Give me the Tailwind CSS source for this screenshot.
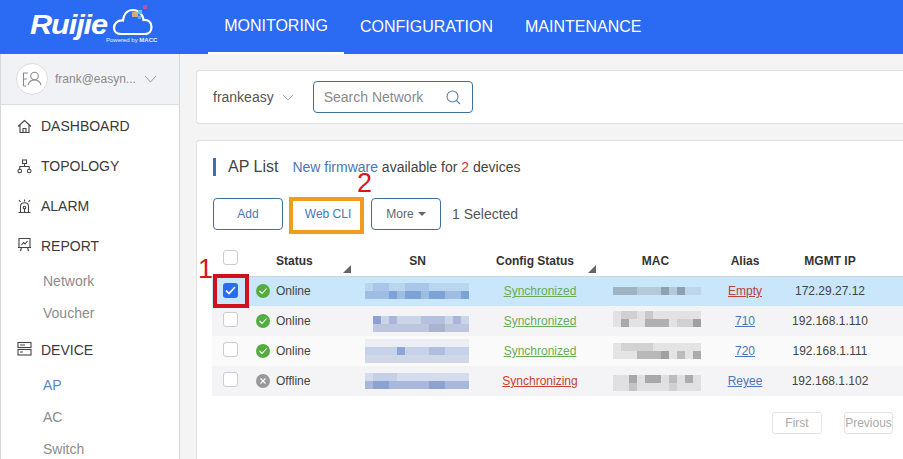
<!DOCTYPE html>
<html lang="en">
<head>
  <meta charset="UTF-8">
  <script src="https://cdn.jsdelivr.net/npm/@tailwindcss/browser@4"></script>
  <title>AP List</title>
</head>
<body class="w-[903px] h-[459px] overflow-hidden bg-[#f4f4f4] font-['Liberation_Sans',Arial,sans-serif] text-[#333]">
  <!-- Header -->
  <header class="h-[54px] bg-[#2b6af2] flex text-white">
    <div class="w-[208px] relative shrink-0">
      <span class="absolute left-[30px] top-[10px] text-[27px] leading-[30px] font-bold italic tracking-[-1px] scale-x-[1.14] origin-left">Ruijie</span>
      <svg class="absolute left-[112px] top-[4px]" width="42" height="32" viewBox="0 0 42 32" fill="none">
        <path d="M9 30 H33 C38 30 39.500 26 39.500 23 C39.500 18 36 15.500 31.500 16 C31 11 27 6 21 6 C14.500 6 11.500 11 11 16.500 C5 16 2 20 2 24 C2 27.500 5 30 9 30 Z" stroke="#fff" stroke-width="2.200"/>
        <rect x="20" y="8" width="6" height="5" fill="#c9b27a"/>
        <rect x="26" y="6" width="4" height="4" fill="#5fc6e8"/>
        <rect x="26" y="12" width="3" height="3" fill="#6fa8ee"/>
        <rect x="31" y="1" width="4" height="4" fill="#c2509e"/>
      </svg>
      <span class="absolute left-[106px] top-[37px] text-[6px] leading-[7px] whitespace-nowrap text-white/90">Powered by <b>MACC</b></span>
    </div>
    <nav class="flex text-[16px]">
      <a class="w-[136px] h-[54px] flex items-center justify-center border-b-[2px] border-white">MONITORING</a>
      <a class="ml-[16px] h-[54px] flex items-center">CONFIGURATION</a>
      <a class="ml-[32px] h-[54px] flex items-center">MAINTENANCE</a>
    </nav>
  </header>

  <div class="flex h-[405px]">
    <!-- Sidebar -->
    <aside class="w-[180px] shrink-0 bg-white border-l border-r border-[#d9d9d9] overflow-hidden">
      <div class="h-[51px] bg-[#f0f2f5] border-b border-[#dcdcdc] flex items-center pl-[15px]">
        <span class="w-[32px] h-[32px] rounded-full bg-white border border-[#ddd] flex items-center justify-center">
          <svg width="20" height="16" viewBox="0 0 20 16" fill="none" stroke="#888" stroke-width="1.100">
            <path d="M6 2 H1.500 V15 M1.500 8 H5 M1.500 15 H4"/>
            <circle cx="12.500" cy="5" r="3.800"/>
            <path d="M6 14 C7 10.500 9.500 9 12.500 9 C15.500 9 18 10.500 19 14"/>
          </svg>
        </span>
        <span class="ml-[7px] text-[12px] text-[#8a8a8a]">frank@easyn...</span>
        <svg class="ml-[8px]" width="13" height="8" viewBox="0 0 13 8" fill="none" stroke="#999" stroke-width="1"><path d="M1 1 L6.500 7 L12 1"/></svg>
      </div>
      <ul class="text-[14px] text-[#3a3a3a]">
        <li class="h-[40px] flex items-center pl-[16px] pt-[2px] gap-[9px]">
          <svg class="w-[15px] h-[15px]" viewBox="0 0 15 15" fill="none" stroke="#444" stroke-width="1.100"><path d="M1 7.500 L7.500 1.500 L14 7.500 M3 6 V13.500 H12 V6 M6 13.500 V9.500 H9 V13.500"/></svg>
          DASHBOARD
        </li>
        <li class="h-[40px] flex items-center pl-[16px] pt-[2px] gap-[9px]">
          <svg class="w-[15px] h-[15px]" viewBox="0 0 15 15" fill="none" stroke="#444" stroke-width="1.100"><rect x="5.500" y="1" width="4" height="3.500"/><circle cx="2.800" cy="12" r="1.800"/><circle cx="12.200" cy="12" r="1.800"/><path d="M7.500 4.500 V7.500 M2.800 10 V7.500 H12.200 V10"/></svg>
          TOPOLOGY
        </li>
        <li class="h-[40px] flex items-center pl-[16px] pt-[2px] gap-[9px]">
          <svg class="w-[15px] h-[15px]" viewBox="0 0 15 15" fill="none" stroke="#444" stroke-width="1.100"><path d="M3.500 13.500 V7.500 C3.500 5 5 3.800 7.500 3.800 C10 3.800 11.500 5 11.500 7.500 V13.500 M1.500 13.500 H13.500 M2 1 L3.500 3 M13 1 L11.500 3 M7.500 0.500 V2.500"/><circle cx="7.500" cy="8.500" r="1.300"/><path d="M7.500 10 V13"/></svg>
          ALARM
        </li>
        <li class="h-[40px] flex items-center pl-[16px] pt-[2px] gap-[9px]">
          <svg class="w-[15px] h-[15px] -translate-y-[2px]" viewBox="0 0 15 15" fill="none" stroke="#444" stroke-width="1.100"><path d="M2 1.500 H13 V10.500 H2 Z M1 10.500 H14 M4.500 10.500 L3.500 14 M10.500 10.500 L11.500 14"/><path d="M4.500 8 L6.500 5.500 L8 7 L10.500 4"/></svg>
          REPORT
        </li>
        <li class="h-[32px] flex items-center pl-[42px] text-[#8c8c8c]">Network</li>
        <li class="h-[32px] flex items-center pl-[42px] text-[#8c8c8c]">Voucher</li>
        <li class="h-[40px] flex items-center pl-[16px] pt-[2px] gap-[9px]">
          <svg class="w-[15px] h-[15px] -translate-y-[2px]" viewBox="0 0 15 15" fill="none" stroke="#444" stroke-width="1.100"><rect x="1" y="1.500" width="13" height="5"/><rect x="1" y="8.500" width="13" height="5.500"/><path d="M3 4 H8 M3 11 H6"/></svg>
          DEVICE
        </li>
        <li class="h-[32px] flex items-center pl-[42px] text-[#5b85c4]">AP</li>
        <li class="h-[32px] flex items-center pl-[42px] text-[#8c8c8c]">AC</li>
        <li class="h-[32px] flex items-center pl-[42px] text-[#8c8c8c]">Switch</li>
      </ul>
    </aside>

    <!-- Main -->
    <main class="flex-1 min-w-0 pl-[16px] pt-[16px] overflow-hidden">
      <section class="h-[54px] bg-white border border-[#e2e2e2] border-r-0 rounded-l-[4px] flex items-center pl-[16px]">
        <span class="text-[14px] text-[#555]">frankeasy</span>
        <svg class="ml-[8px]" width="12" height="7" viewBox="0 0 12 7" fill="none" stroke="#aaa" stroke-width="1"><path d="M1 1 L6 6 L11 1"/></svg>
        <div class="ml-[19px] w-[160px] h-[32px] border border-[#3f6f9e] rounded-[4px] flex items-center pl-[10px] pr-[11px] justify-between">
          <span class="text-[14px] text-[#8a8a8a]">Search Network</span>
          <svg width="15" height="15" viewBox="0 0 15 15" fill="none" stroke="#5b7fa8" stroke-width="1.100"><circle cx="6.500" cy="6.500" r="5.500"/><path d="M10.500 10.500 L14 14"/></svg>
        </div>
      </section>

      <section class="relative mt-[16px] h-[330px] bg-white border border-[#e2e2e2] border-r-0 rounded-l-[4px]">
        <div class="flex items-center h-[18px] mt-[17px] ml-[16px]">
          <span class="w-[3px] h-[18px] bg-[#3b6fb8]"></span>
          <span class="ml-[12px] text-[16px] text-[#444]">AP List</span>
          <span class="ml-[14px] text-[14px] text-[#444]"><span class="text-[#4a76b8]">New firmware</span> available for <span class="text-[#d0342c]">2</span> devices</span>
        </div>
        <div class="flex items-center mt-[22px] ml-[16px] text-[12px]">
          <button class="w-[70px] h-[32px] border border-[#3f6f9e] rounded-[4px] text-[#4a76b8]">Add</button>
          <button class="ml-[10px] w-[70px] h-[32px] rounded-[4px] text-[#4a76b8]">Web CLI</button>
          <button class="ml-[8px] w-[70px] h-[32px] border border-[#3f6f9e] rounded-[4px] text-[#666] flex items-center justify-center gap-[4px]">More <span class="w-0 h-0 border-x-[4px] border-x-transparent border-t-[4px] border-t-[#666]"></span></button>
          <span class="ml-[11px] text-[14px] text-[#555]">1 Selected</span>
        </div>

        <table class="mt-[11px] ml-[15px] table-fixed w-[720px] text-[12px] text-[#444] border-collapse">
          <colgroup>
            <col class="w-[38px]"><col class="w-[95px]"><col class="w-[145px]"><col class="w-[100px]"><col class="w-[125px]"><col class="w-[60px]"><col class="w-[110px]"><col class="w-[47px]">
          </colgroup>
          <thead>
            <tr class="h-[35px] font-bold text-[#333] border-b border-[#cfd6dc]">
              <th class="relative"><span class="absolute left-[11px] top-[9px] w-[15px] h-[15px] border border-[#ccc] rounded-[3px]"></span></th>
              <th class="relative text-left pl-[26px] align-bottom pb-[6px]">Status<span class="absolute right-[-6px] bottom-[3px] w-0 h-0 border-l-[8px] border-l-transparent border-b-[8px] border-b-[#666]"></span></th>
              <th class="align-bottom pb-[6px]">SN</th>
              <th class="relative align-bottom pb-[6px] pr-[10px]">Config Status<span class="absolute right-[-6px] bottom-[3px] w-0 h-0 border-l-[8px] border-l-transparent border-b-[8px] border-b-[#666]"></span></th>
              <th class="align-bottom pb-[6px] pl-[6px]">MAC</th>
              <th class="align-bottom pb-[6px]">Alias</th>
              <th class="align-bottom pb-[6px]">MGMT IP</th>
              <th></th>
            </tr>
          </thead>
          <tbody>
            <tr class="h-[30px] bg-[#c9e6fb]">
              <td class="relative"><span class="absolute left-[11px] top-[6px] w-[15px] h-[15px] bg-[#2b6af2] rounded-[3px] flex items-center justify-center"><svg width="11" height="9" viewBox="0 0 11 9" fill="none" stroke="#fff" stroke-width="1.600"><path d="M1 4.500 L4 7.500 L10 1"/></svg></span></td>
              <td><div class="flex items-center pl-[6px] gap-[6px]"><svg width="14" height="14" viewBox="0 0 14 14"><circle cx="7" cy="7" r="7" fill="#55ad42"/><path d="M3.500 7 L6 9.500 L10.500 4.500" fill="none" stroke="#fff" stroke-width="1.100"/></svg>Online</div></td>
              <td class="pl-[20px]">
                <svg class="block" width="104" height="16" viewBox="0 0 104 16"><rect width="104" height="16" fill="#bcd5ee"/><rect x="8" width="16" height="8" fill="#a9c6e8"/><rect x="40" width="24" height="8" fill="#a9c6e8"/><rect y="8" width="104" height="8" fill="#9dbde2"/><rect x="24" y="8" width="8" height="8" fill="#7ba3d6"/><rect x="40" y="8" width="16" height="8" fill="#7ba3d6"/><rect x="64" y="8" width="16" height="8" fill="#7ba3d6"/><rect x="96" y="8" width="8" height="8" fill="#7ba3d6"/></svg>
              </td>
              <td class="text-center text-[#67ad56] underline">Synchronized</td>
              <td class="pl-[23px]">
                <svg class="block" width="88" height="8" viewBox="0 0 88 8"><rect width="88" height="8" fill="#b5c9d8"/><rect width="24" height="8" fill="#9fb3c2"/><rect x="48" width="8" height="8" fill="#8ca2b3"/><rect x="64" width="8" height="8" fill="#8ca2b3"/><rect x="72" width="16" height="8" fill="#bdd6e8"/></svg>
              </td>
              <td class="text-center text-[#b8433f] underline">Empty</td>
              <td class="text-center">172.29.27.12</td>
              <td class="pl-[32px]">1</td>
            </tr>
            <tr class="h-[30px] bg-[#f4f4f6]">
              <td class="relative"><span class="absolute left-[11px] top-[6px] w-[15px] h-[15px] bg-white border border-[#ccc] rounded-[3px]"></span></td>
              <td><div class="flex items-center pl-[6px] gap-[6px]"><svg width="14" height="14" viewBox="0 0 14 14"><circle cx="7" cy="7" r="7" fill="#55ad42"/><path d="M3.500 7 L6 9.500 L10.500 4.500" fill="none" stroke="#fff" stroke-width="1.100"/></svg>Online</div></td>
              <td class="pl-[28px]">
                <svg class="block mt-[6px]" width="96" height="16" viewBox="0 0 96 16"><rect width="96" height="16" fill="#ccd4e8"/><rect width="8" height="8" fill="#8f9fd0"/><rect x="16" width="8" height="8" fill="#aab6dc"/><rect x="48" width="24" height="8" fill="#b5bfe0"/><rect x="80" width="8" height="8" fill="#aab6dc"/><rect y="8" width="96" height="8" fill="#bcc6de"/><rect x="56" y="8" width="16" height="8" fill="#a8b4d0"/></svg>
              </td>
              <td class="text-center text-[#67ad56] underline">Synchronized</td>
              <td class="pl-[23px]">
                <svg class="block mb-[4px]" width="88" height="16" viewBox="0 0 88 16"><rect width="88" height="16" fill="#e2e2e2"/><rect x="8" width="16" height="8" fill="#d0d0d0"/><rect x="32" width="8" height="8" fill="#c8c8c8"/><rect x="8" y="8" width="8" height="8" fill="#a8a8a8"/><rect x="32" y="8" width="24" height="8" fill="#b0b0b0"/><rect x="64" y="8" width="16" height="8" fill="#d0d0d0"/><rect x="80" y="8" width="8" height="8" fill="#a0a0a0"/></svg>
              </td>
              <td class="text-center text-[#4a76b8] underline">710</td>
              <td class="text-center">192.168.1.110</td>
              <td></td>
            </tr>
            <tr class="h-[30px] bg-[#fafafa]">
              <td class="relative"><span class="absolute left-[11px] top-[6px] w-[15px] h-[15px] bg-white border border-[#ccc] rounded-[3px]"></span></td>
              <td><div class="flex items-center pl-[6px] gap-[6px]"><svg width="14" height="14" viewBox="0 0 14 14"><circle cx="7" cy="7" r="7" fill="#55ad42"/><path d="M3.500 7 L6 9.500 L10.500 4.500" fill="none" stroke="#fff" stroke-width="1.100"/></svg>Online</div></td>
              <td class="pl-[20px]">
                <svg class="block" width="104" height="24" viewBox="0 0 104 24"><rect width="104" height="8" fill="#eceef4"/><rect y="8" width="104" height="8" fill="#c6d2ea"/><rect x="32" y="8" width="8" height="8" fill="#8ea6d4"/><rect x="64" y="8" width="16" height="8" fill="#aebde0"/><rect y="16" width="104" height="8" fill="#d0d8e8"/></svg>
              </td>
              <td class="text-center text-[#67ad56] underline">Synchronized</td>
              <td class="pl-[23px]">
                <svg class="block" width="88" height="16" viewBox="0 0 88 16"><rect width="88" height="16" fill="#e4e4e4"/><rect x="8" width="32" height="8" fill="#d2d2d2"/><rect x="24" y="8" width="24" height="8" fill="#b8b8b8"/><rect x="48" y="8" width="8" height="8" fill="#a0a0a0"/><rect x="64" y="8" width="8" height="8" fill="#bcbcbc"/><rect x="80" y="8" width="8" height="8" fill="#acacac"/></svg>
              </td>
              <td class="text-center text-[#4a76b8] underline">720</td>
              <td class="text-center">192.168.1.111</td>
              <td></td>
            </tr>
            <tr class="h-[30px] bg-[#f4f4f6]">
              <td class="relative"><span class="absolute left-[11px] top-[6px] w-[15px] h-[15px] bg-white border border-[#ccc] rounded-[3px]"></span></td>
              <td><div class="flex items-center pl-[6px] gap-[6px]"><svg width="14" height="14" viewBox="0 0 14 14"><circle cx="7" cy="7" r="7" fill="#999"/><path d="M4.500 4.500 L9.500 9.500 M9.500 4.500 L4.500 9.500" fill="none" stroke="#fff" stroke-width="1.200"/></svg>Offline</div></td>
              <td class="pl-[20px]">
                <svg class="block" width="104" height="16" viewBox="0 0 104 16"><rect width="104" height="8" fill="#d4dcee"/><rect x="8" width="24" height="8" fill="#c4cfe8"/><rect y="8" width="104" height="8" fill="#a8b8dc"/><rect x="8" y="8" width="16" height="8" fill="#8ea2d0"/><rect x="64" y="8" width="16" height="8" fill="#8ea2d0"/></svg>
              </td>
              <td class="text-center text-[#c8432f] underline">Synchronizing</td>
              <td class="pl-[23px]">
                <svg class="block mt-[4px]" width="88" height="16" viewBox="0 0 88 16"><rect width="88" height="16" fill="#e0e0e0"/><rect x="16" width="8" height="8" fill="#a8a8a8"/><rect x="32" width="16" height="8" fill="#a8a8a8"/><rect x="56" width="8" height="8" fill="#bcbcbc"/><rect x="72" width="8" height="8" fill="#acacac"/><rect x="16" y="8" width="8" height="8" fill="#c4c4c4"/><rect x="56" y="8" width="8" height="8" fill="#d0d0d0"/></svg>
              </td>
              <td class="text-center text-[#4a76b8] underline">Reyee</td>
              <td class="text-center">192.168.1.102</td>
              <td></td>
            </tr>
          </tbody>
        </table>

        <div class="flex justify-end mt-[16px] w-[696px] gap-[22px] text-[12px] text-[#aaa]">
          <span class="w-[50px] h-[22px] border border-[#e4e4e4] rounded-[3px] flex items-center justify-center">First</span>
          <span class="w-[49px] h-[22px] border border-[#e4e4e4] rounded-[3px] flex items-center justify-center">Previous</span>
        </div>

        <!-- annotations on top of the screenshot -->
        <span class="absolute left-[92px] top-[56px] w-[75px] h-[37px] border-[4px] border-[#f09c1e]"></span>
        <span class="absolute left-[160px] top-[27px] text-[27px] leading-[30px] text-[#d6181e]">2</span>
        <span class="absolute left-[16px] top-[133px] w-[36px] h-[34px] border-[4px] border-[#d0101a]"></span>
        <span class="absolute left-[1px] top-[113px] text-[27px] leading-[30px] text-[#d6181e]">1</span>
      </section>
    </main>
  </div>
</body>
</html>
